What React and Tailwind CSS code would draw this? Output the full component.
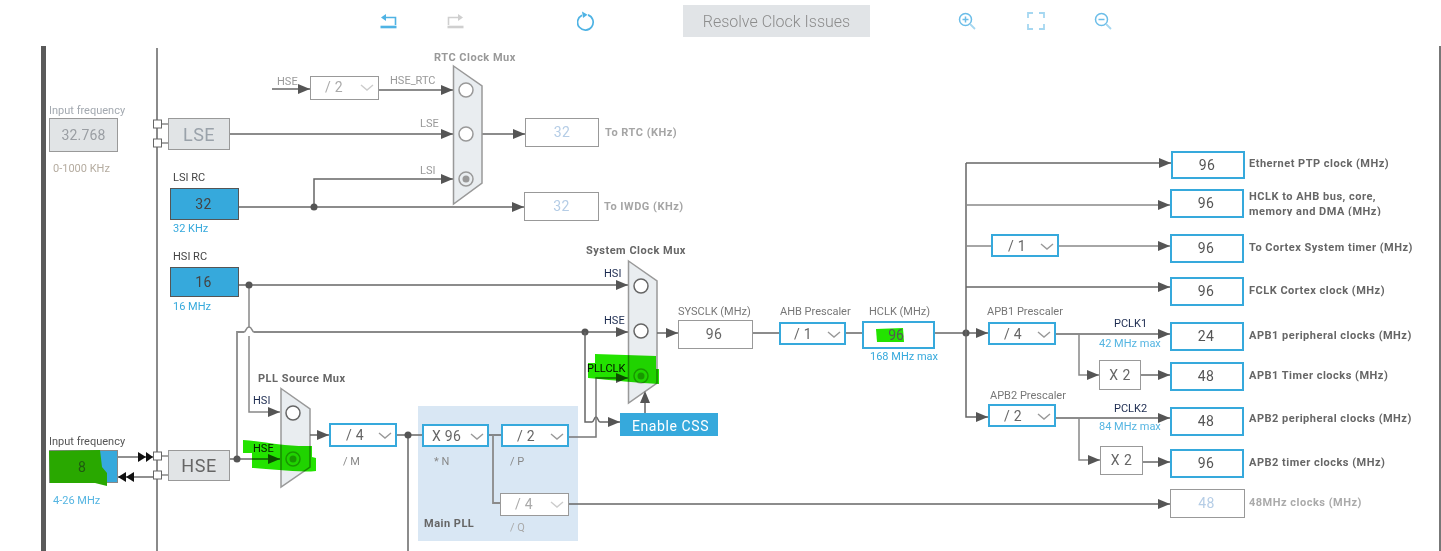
import React from "react";

function A({ x, y, d = "r", f = "#555" }) {
  const p =
    d === "r" ? `${x - 12},${y - 5} ${x},${y} ${x - 12},${y + 5}` :
    d === "l" ? `${x + 10},${y - 5} ${x},${y} ${x + 10},${y + 5}` :
    `${x - 5},${y + 12} ${x},${y} ${x + 5},${y + 12}`;
  return <polygon points={p} fill={f} />;
}

function W({ d, c = "#666", w = 1.5 }) {
  return <path d={d} fill="none" stroke={c} strokeWidth={w} />;
}

function Dot({ x, y }) {
  return <circle cx={x} cy={y} r="3.5" fill="#555" />;
}

function Port({ y }) {
  return (
    <g>
      <line x1="161" y1={y} x2="170" y2={y} stroke="#888" strokeWidth="1.5" />
      <rect x="153.5" y={y - 4} width="8" height="8" fill="#fff" stroke="#666" strokeWidth="1" />
    </g>
  );
}

function Radio({ x, y, on, c = "#666" }) {
  return (
    <g>
      <circle cx={x} cy={y} r="7" fill={on ? "none" : "#fff"} stroke={c} strokeWidth="1.5" />
      {on && <circle cx={x} cy={y} r="3.5" fill={c} />}
    </g>
  );
}

function T({ c, children }) {
  return <div className={`absolute mt-[1px] whitespace-nowrap text-[11px] leading-[14px] ${c}`}>{children}</div>;
}

function L({ c, children }) {
  return <div className={`absolute mt-[1px] whitespace-nowrap text-[11px] leading-[14px] tracking-[0.5px] font-bold ${c}`}>{children}</div>;
}

function B({ c, children }) {
  return <div className={`absolute flex items-center justify-center box-border text-[14px] tracking-[0.5px] ${c}`}>{children}</div>;
}

function Out({ c, children }) {
  return <B c={`border-2 border-[#36a9dc] bg-white text-[#555] pr-[2px] ${c}`}>{children}</B>;
}

function Chevron({ c = "#999", off }) {
  return (
    <svg width="14" height="7" viewBox="0 0 14 7" className={`absolute top-[7px] ${off ? "right-[4px]" : "right-[3px]"}`}>
      <path d="M1 1 L7 6 L13 1" fill="none" stroke={c} strokeWidth="1.4" />
    </svg>
  );
}

function Sel({ c, off, children }) {
  return (
    <div className={`absolute box-border bg-white text-[14px] leading-[20px] tracking-[0.3px] ${off ? "border border-[#999] text-[#aaa]" : "border-[2px] border-[#36a9dc] text-[#666]"} ${c}`}>
      {children}
      <Chevron c={off ? "#ccc" : "#999"} off={off} />
    </div>
  );
}

export default function App() {
  return (
    <div className="w-[1441px] h-[551px] overflow-hidden bg-white font-['Roboto',sans-serif]">
      <div className="flex items-center h-[46px] pb-[4px] pl-[380px]">
        <svg width="17" height="17" viewBox="0 0 17 17" fill="none">
          <path d="M1 4.5 L6 1 V8 Z" fill="#4fb3e4" />
          <path d="M5 4.5 H15.5 V12" stroke="#4fb3e4" strokeWidth="1.6" />
          <path d="M0.5 14 H16.5" stroke="#4fb3e4" strokeWidth="2.6" />
        </svg>
        <svg width="17" height="17" viewBox="0 0 17 17" fill="none" className="ml-[50px]">
          <path d="M16 4.5 L11 1 V8 Z" fill="#cfcfcf" />
          <path d="M12 4.5 H1.5 V12" stroke="#cfcfcf" strokeWidth="1.6" />
          <path d="M0.5 14 H16.5" stroke="#cfcfcf" strokeWidth="2.6" />
        </svg>
        <svg width="18" height="20" viewBox="0 0 18 20" fill="none" className="ml-[113px]">
          <path d="M5 4.2 A7.8 7.8 0 1 0 11 3.9" stroke="#4fb3e4" strokeWidth="1.7" />
          <path d="M5 0.5 L10.5 3.8 L6 7 Z" fill="#4fb3e4" />
        </svg>
        <div className="ml-[88px] w-[187px] h-[32px] pt-[1px] flex items-center justify-center bg-[#e1e4e7] text-[16px] font-light text-[#8c8c8c]">
          Resolve Clock Issues
        </div>
        <svg width="18" height="18" viewBox="0 0 18 18" fill="none" className="ml-[88px]">
          <circle cx="7.5" cy="7.5" r="6" stroke="#6bbde8" strokeWidth="1.5" />
          <path d="M7.5 4.5 V10.5 M4.5 7.5 H10.5" stroke="#6bbde8" strokeWidth="1.5" />
          <path d="M12 12 L17 17" stroke="#a5d7f1" strokeWidth="1.8" />
        </svg>
        <svg width="18" height="18" viewBox="0 0 18 18" fill="none" className="ml-[51px]">
          <path d="M1 6 V1 H6 M12 1 H17 V6 M17 12 V17 H12 M6 17 H1 V12" stroke="#a5d7f1" strokeWidth="1.8" />
        </svg>
        <svg width="18" height="18" viewBox="0 0 18 18" fill="none" className="ml-[49px]">
          <circle cx="7.5" cy="7.5" r="6" stroke="#6bbde8" strokeWidth="1.5" />
          <path d="M4.5 7.5 H10.5" stroke="#6bbde8" strokeWidth="1.5" />
          <path d="M12 12 L17 17" stroke="#a5d7f1" strokeWidth="1.8" />
        </svg>
      </div>

      <div className="relative w-[1441px] h-[505px] overflow-hidden">
        <div className="absolute left-[41px] top-0 w-[5px] h-[505px] bg-[#5a5a5a]" />
        <div className="absolute left-[156px] top-[2px] w-[2px] h-[503px] bg-[#8a8a8a]" />
        <div className="absolute left-[1439px] top-0 w-[2px] h-[505px] bg-[#777]" />
        <div className="absolute left-[418px] top-[360px] w-[160px] h-[135px] bg-[#d9e7f4]" />

        <svg className="absolute left-0 top-0" width="1441" height="505" viewBox="0 46 1441 505">
          {/* RTC */}
          <W d="M272 89 H310" />
          <A x={310} y={89} />
          <W d="M379 90 H453" />
          <A x={453} y={90} />
          <W d="M230 134 H453" />
          <A x={453} y={134} />
          <W d="M482 134 H525" />
          <A x={525} y={134} />
          <W d="M239 207 H524" />
          <A x={524} y={207} />
          <W d="M314 207 V179 H453" />
          <A x={453} y={179} />
          <Dot x={314} y={207} />
          <polygon points="453.5,66 482,86 482,183 453.5,204" fill="#e9edf0" stroke="#999" strokeWidth="1.5" />
          <Radio x={466} y={90} c="#999" />
          <Radio x={466} y={134} c="#999" />
          <Radio x={466} y={179} on c="#999" />

          {/* left connectors */}
          <Port y={124} />
          <Port y={143} />
          <W d="M118 457 H153" c="#222" w={1.2} />
          <W d="M118 477 H153" c="#222" w={1.2} />
          <polygon points="138,452 146,457 138,462" fill="#111" />
          <polygon points="146,452 153,457 146,462" fill="#111" />
          <polygon points="118,477 126,472 126,482" fill="#111" />
          <polygon points="126,477 134,472 134,482" fill="#111" />
          <Port y={456} />
          <Port y={475} />

          {/* HSI / HSE routing */}
          <W d="M239 285 H628" />
          <A x={628} y={285} />
          <W d="M249 285 V327 M249 336 V412 H280" c="#888" />
          <W d="M244 332 C246 332 246 327 249 327 C252 327 252 332 254 332" c="#888" />
          <A x={280} y={412} />
          <W d="M237 459 V332 H244 M254 332 H628" c="#8a8a8a" w={1.8} />
          <W d="M230 459 H280" />
          <A x={280} y={459} />
          <Dot x={237} y={459} />
          <Dot x={249} y={285} />
          <Dot x={585} y={332} />
          <A x={628} y={332} />
          <W d="M585 332 V422 H592 M600 422 H620" />
          <W d="M592 422 C594 422 594 417 596 417 C598 417 598 422 600 422" />
          <A x={620} y={422} />
          <W d="M569 437 H596 V378 H628" c="#777" />
          <A x={628} y={378} />

          {/* muxes */}
          <polygon points="628.5,261 657,281 657,383 628.5,403" fill="#e9edf0" stroke="#999" strokeWidth="1.5" />
          <Radio x={641} y={286} />
          <Radio x={641} y={331} />
          <Radio x={641} y={376} on c="#aaa" />
          <W d="M645 413 V395" />
          <A x={645} y={391} d="u" />
          <polygon points="281,388.5 310,409 310,467 281,487" fill="#e9edf0" stroke="#999" strokeWidth="1.5" />
          <Radio x={293} y={413} />
          <Radio x={293} y={459} on c="#aaa" />

          {/* PLL */}
          <W d="M310 435 H329" />
          <A x={329} y={435} />
          <W d="M397 435 H422" />
          <W d="M408 435 V551" />
          <Dot x={408} y={435} />
          <W d="M489 435 H501" />
          <W d="M493 435 V503 H500" c="#8a8a8a" w={1.8} />
          <W d="M569 504 H1171" />
          <A x={1170} y={504} />

          {/* centre line */}
          <W d="M657 333 H678" />
          <A x={678} y={333} />
          <W d="M753 333 H779" />
          <W d="M846 333 H862" />
          <W d="M935 333 H988" />
          <A x={988} y={333} />
          <Dot x={966} y={333} />
          <W d="M966 163 V417 H988" />
          <A x={988} y={417} />

          {/* right */}
          <W d="M966 163 H1171" />
          <A x={1171} y={163} />
          <W d="M966 205 H1170" c="#888" />
          <A x={1170} y={205} />
          <W d="M966 246 H1170" c="#888" />
          <A x={1170} y={246} />
          <W d="M966 287 H1170" />
          <A x={1170} y={287} />
          <W d="M1056 334 H1170" />
          <A x={1170} y={334} />
          <W d="M1079 334 V375 H1099" c="#888" />
          <A x={1099} y={375} />
          <W d="M1141 375 H1170" />
          <A x={1170} y={375} />
          <W d="M1056 418 H1170" />
          <A x={1170} y={418} />
          <W d="M1079 418 V460 H1100" c="#888" />
          <A x={1100} y={460} />
          <W d="M1142 462 H1170" />
          <A x={1170} y={462} />
        </svg>

        <T c="left-[49px] top-[57px] text-[#a3a9b0]">Input frequency</T>
        <B c="left-[49px] top-[72px] w-[69px] h-[34px] bg-[#e1e4e6] border border-[#999] !tracking-[0.2px] text-[#9a9ea3]">32.768</B>
        <T c="left-[53px] top-[115px] text-[#b5aca0]">0-1000 KHz</T>
        <B c="left-[168px] top-[72px] w-[62px] h-[32px] bg-[#e1e4e6] border border-[#999] !text-[18px] text-[#9aa2aa]">LSE</B>

        <T c="left-[173px] top-[124px] text-[#444]">LSI RC</T>
        <B c="left-[170px] top-[142px] w-[69px] h-[32px] pr-[2px] bg-[#36a9dc] border border-[#555] text-[#444]">32</B>
        <T c="left-[173px] top-[175px] text-[#36a9dc]">32 KHz</T>
        <T c="left-[173px] top-[203px] text-[#444]">HSI RC</T>
        <B c="left-[170px] top-[221px] w-[69px] h-[30px] pr-[2px] bg-[#36a9dc] border border-[#555] text-[#444]">16</B>
        <T c="left-[173px] top-[253px] text-[#36a9dc]">16 MHz</T>

        <T c="left-[49px] top-[388px] text-[#555]">Input frequency</T>
        <B c="left-[49px] top-[404px] w-[69px] h-[33px] bg-[#36a9dc] border border-[#888]" />
        <B c="left-[168px] top-[404px] w-[62px] h-[31px] bg-[#e1e4e6] border border-[#999] !text-[18px] text-[#666]">HSE</B>
        <T c="left-[53px] top-[447px] text-[#55b5e2]">4-26 MHz</T>

        <T c="left-[277px] top-[28px] text-[#999]">HSE</T>
        <Sel off c="left-[310px] top-[30px] w-[69px] h-[24px] pl-[14px]">/ 2</Sel>
        <T c="left-[390px] top-[27px] text-[#999]">HSE_RTC</T>
        <L c="left-[434px] top-[4px] text-[#999]">RTC Clock Mux</L>
        <T c="left-[420px] top-[70px] text-[#999]">LSE</T>
        <T c="left-[420px] top-[117px] text-[#999]">LSI</T>
        <B c="left-[525px] top-[72px] w-[74px] h-[29px] bg-white border border-[#999] text-[#b5cde6]">32</B>
        <L c="left-[605px] top-[79px] text-[#a5a5a5]">To RTC (KHz)</L>
        <B c="left-[524px] top-[146px] w-[75px] h-[29px] bg-white border border-[#999] text-[#b5cde6]">32</B>
        <L c="left-[604px] top-[153px] text-[#a5a5a5]">To IWDG (KHz)</L>

        <L c="left-[586px] top-[197px] text-[#666]">System Clock Mux</L>
        <T c="left-[604px] top-[220px] text-[#1c2b50]">HSI</T>
        <T c="left-[604px] top-[267px] text-[#1c2b50]">HSE</T>
        <T c="left-[587px] top-[315px] text-[#111]">PLLCLK</T>
        <B c="left-[620px] top-[367px] w-[98px] h-[23px] pt-[3px] pl-[3px] !tracking-[0.6px] bg-[#36a9dc] text-white">Enable CSS</B>

        <L c="left-[258px] top-[325px] text-[#666]">PLL Source Mux</L>
        <T c="left-[253px] top-[347px] text-[#1c2b50]">HSI</T>
        <T c="left-[253px] top-[395px] text-[#222]">HSE</T>

        <Sel c="left-[329px] top-[377px] w-[68px] h-[24px] pl-[15px]">/ 4</Sel>
        <T c="left-[343px] top-[408px] text-[#888]">/ M</T>
        <Sel c="left-[422px] top-[378px] w-[67px] h-[23px] pl-[8px]">X 96</Sel>
        <T c="left-[434px] top-[408px] text-[#888]">* N</T>
        <Sel c="left-[501px] top-[378px] w-[68px] h-[23px] pl-[14px]">/ 2</Sel>
        <T c="left-[510px] top-[408px] text-[#888]">/ P</T>
        <Sel off c="left-[500px] top-[447px] w-[69px] h-[23px] pl-[14px]">/ 4</Sel>
        <T c="left-[510px] top-[474px] text-[#aaa]">/ Q</T>
        <L c="left-[424px] top-[470px] text-[#666]">Main PLL</L>

        <T c="left-[678px] top-[258px] text-[#777]">SYSCLK (MHz)</T>
        <B c="left-[678px] top-[274px] w-[75px] h-[29px] pr-[3px] bg-white border border-[#999] text-[#666]">96</B>
        <T c="left-[780px] top-[258px] text-[#777]">AHB Prescaler</T>
        <Sel c="left-[779px] top-[276px] w-[67px] h-[23px] pl-[13px]">/ 1</Sel>
        <T c="left-[869px] top-[258px] text-[#777]">HCLK (MHz)</T>
        <Out c="left-[862px] top-[275px] w-[73px] h-[28px]" />
        <T c="left-[870px] top-[303px] text-[#36a9dc]">168 MHz max</T>

        <Sel c="left-[991px] top-[188px] w-[68px] h-[23px] pl-[15px]">/ 1</Sel>
        <T c="left-[987px] top-[258px] text-[#777]">APB1 Prescaler</T>
        <Sel c="left-[988px] top-[276px] w-[68px] h-[23px] pl-[14px]">/ 4</Sel>
        <T c="left-[990px] top-[342px] text-[#777]">APB2 Prescaler</T>
        <Sel c="left-[988px] top-[358px] w-[68px] h-[23px] pl-[14px]">/ 2</Sel>
        <T c="left-[1114px] top-[270px] text-[#1c2b50]">PCLK1</T>
        <T c="left-[1099px] top-[290px] text-[#55b5e2]">42 MHz max</T>
        <T c="left-[1114px] top-[355px] text-[#1c2b50]">PCLK2</T>
        <T c="left-[1099px] top-[373px] text-[#55b5e2]">84 MHz max</T>
        <B c="left-[1099px] top-[314px] w-[42px] h-[30px] bg-white border border-[#999] text-[#666]">X 2</B>
        <B c="left-[1100px] top-[400px] w-[43px] h-[29px] bg-white border border-[#999] text-[#666]">X 2</B>

        <Out c="left-[1171px] top-[105px] w-[74px] h-[28px]">96</Out>
        <Out c="left-[1170px] top-[143px] w-[74px] h-[29px]">96</Out>
        <Out c="left-[1170px] top-[188px] w-[74px] h-[29px]">96</Out>
        <Out c="left-[1170px] top-[231px] w-[74px] h-[29px]">96</Out>
        <Out c="left-[1170px] top-[276px] w-[74px] h-[29px]">24</Out>
        <Out c="left-[1170px] top-[316px] w-[74px] h-[29px]">48</Out>
        <Out c="left-[1170px] top-[361px] w-[74px] h-[29px]">48</Out>
        <Out c="left-[1170px] top-[403px] w-[74px] h-[29px]">96</Out>
        <B c="left-[1170px] top-[443px] w-[75px] h-[29px] pr-[2px] bg-white border border-[#999] text-[#b5cde6]">48</B>

        <L c="left-[1249px] top-[110px] text-[#666]">Ethernet PTP clock (MHz)</L>
        <div className="absolute left-[1249px] top-[143px] h-[27px] overflow-hidden whitespace-nowrap text-[11px] leading-[15px] tracking-[0.5px] font-bold text-[#666]">
          HCLK to AHB bus, core,<br />memory and DMA (MHz)
        </div>
        <L c="left-[1249px] top-[194px] text-[#666]">To Cortex System timer (MHz)</L>
        <L c="left-[1249px] top-[237px] text-[#666]">FCLK Cortex clock (MHz)</L>
        <L c="left-[1249px] top-[282px] text-[#666]">APB1 peripheral clocks (MHz)</L>
        <L c="left-[1249px] top-[322px] text-[#666]">APB1 Timer clocks (MHz)</L>
        <L c="left-[1249px] top-[365px] text-[#666]">APB2 peripheral clocks (MHz)</L>
        <L c="left-[1249px] top-[409px] text-[#666]">APB2 timer clocks (MHz)</L>
        <L c="left-[1249px] top-[449px] text-[#aaa]">48MHz clocks (MHz)</L>

        {/* highlighter scribbles */}
        <svg className="absolute left-0 top-0 pointer-events-none mix-blend-multiply" width="1441" height="505" viewBox="0 46 1441 505">
          <path d="M243 440 C262 441 285 447 312 446 V457 L316 458 V471 C300 473 270 469 252 468 V453 H243 Z" fill="#23e300" />
          <path d="M595 354 L656 356 V369 H659 V384 C640 383 610 380 588 378 V363 H595 Z" fill="#23e300" />
          <path d="M876 329 L903 328 L904 342 L877 342 Z" fill="#23e300" />
        </svg>
        <svg className="absolute left-0 top-0 pointer-events-none" width="1441" height="505" viewBox="0 46 1441 505">
          <polygon points="49,451 100,450 102,467 107,473 107,486 95,483 50,483" fill="#29a800" />
        </svg>
        <T c="left-[78px] top-[413px] !text-[14px] text-[#1f5a10]">8</T>
        <T c="left-[896px] top-[281px] !text-[14px] -translate-x-1/2 text-[#555]">96</T>
      </div>
    </div>
  );
}
